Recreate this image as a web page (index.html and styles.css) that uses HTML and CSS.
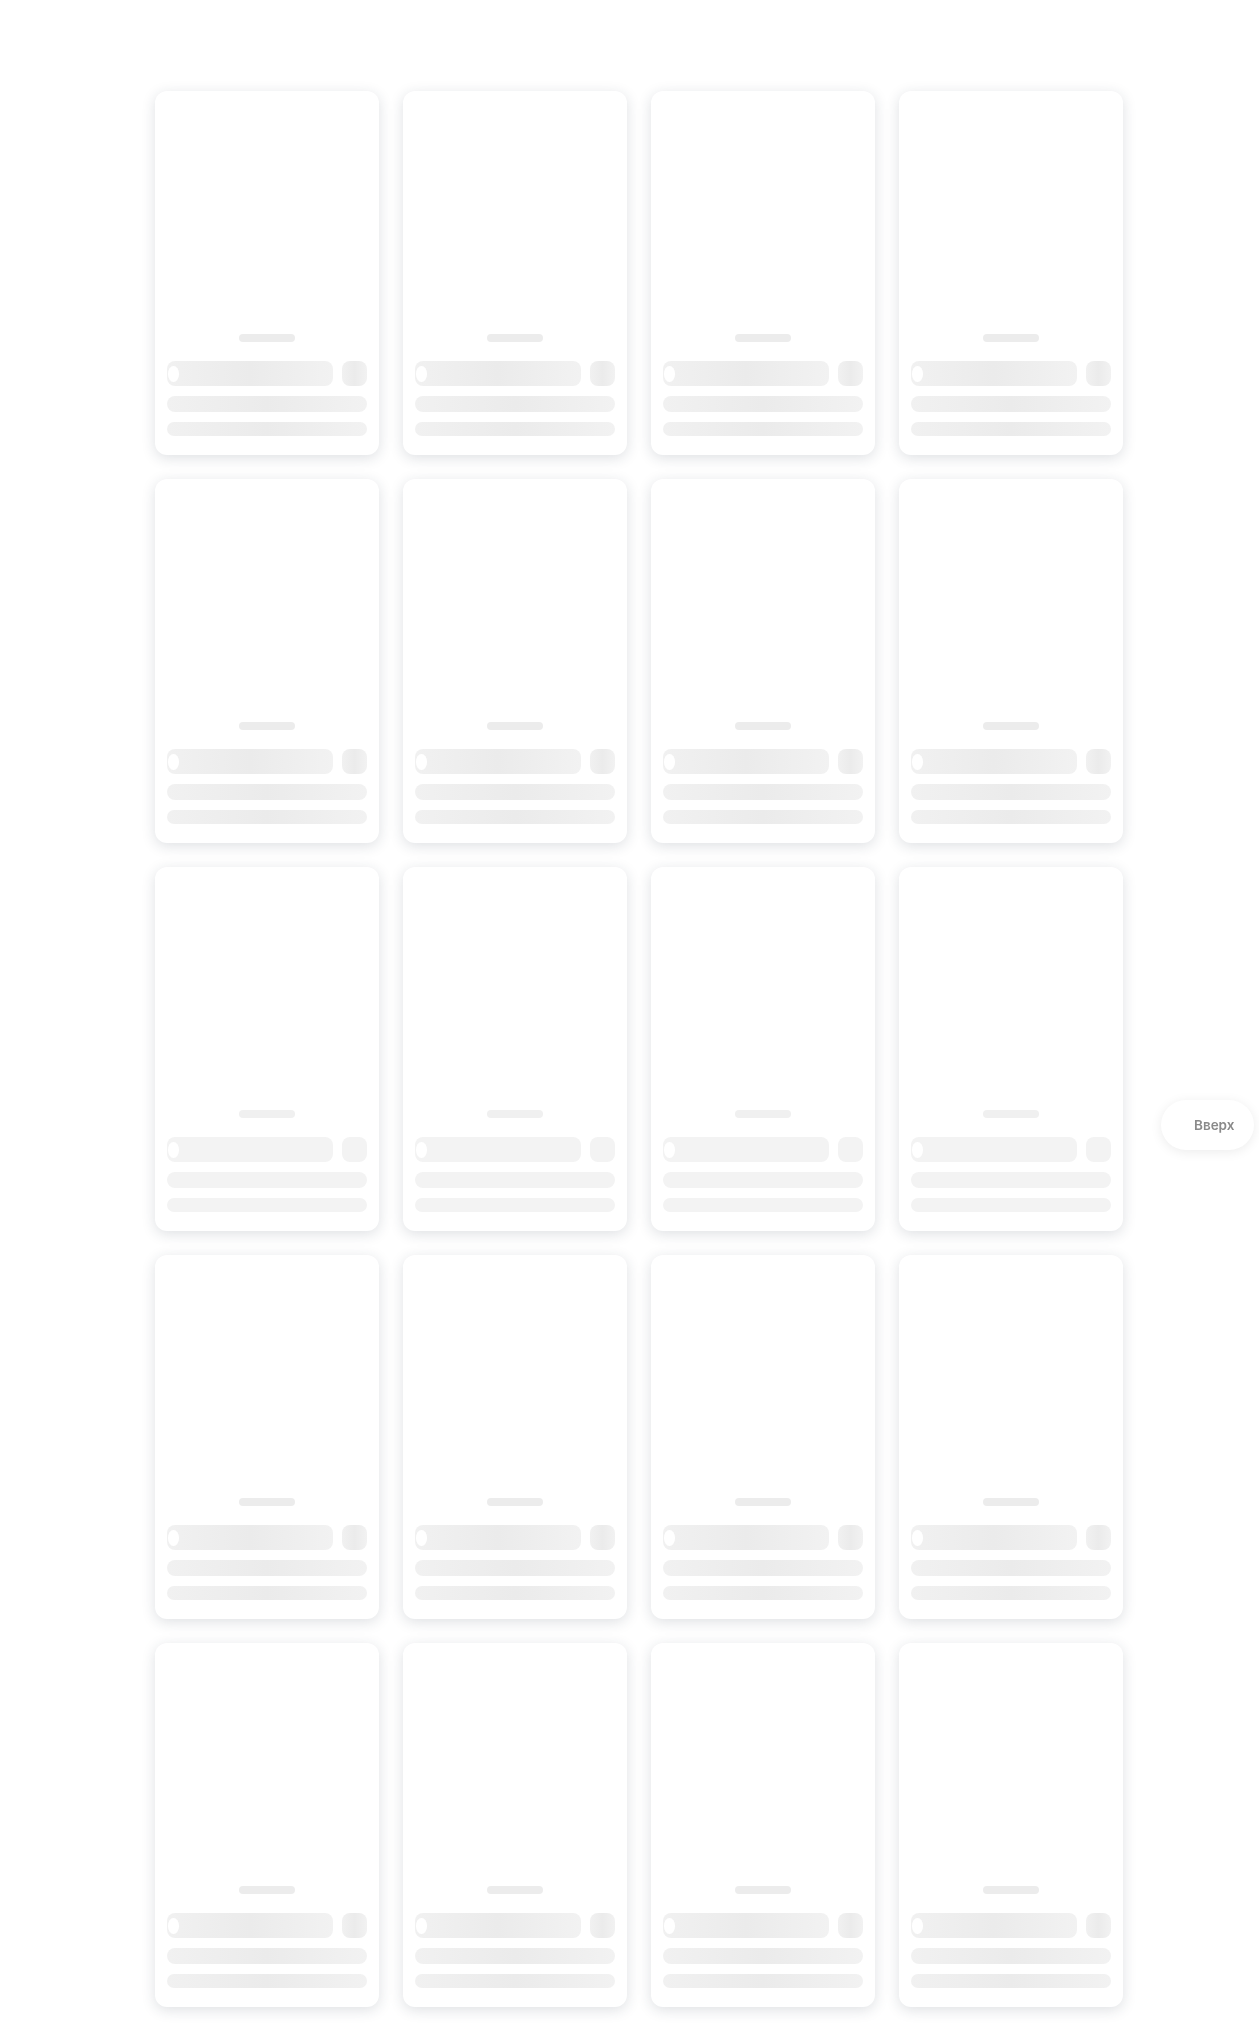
FILE: index.html
```html
<!DOCTYPE html>
<html lang="ru">
<head>
<meta charset="utf-8">
<title>Каталог</title>
<link rel="stylesheet" href="styles.css">
</head>
<body>
<main class="grid">
  <div class="card"><div class="dash"></div><div class="row"><div class="sk title"><span class="dot"></span></div><div class="sk sq"></div></div><div class="sk line1"></div><div class="sk line2"></div></div>
  <div class="card"><div class="dash"></div><div class="row"><div class="sk title"><span class="dot"></span></div><div class="sk sq"></div></div><div class="sk line1"></div><div class="sk line2"></div></div>
  <div class="card"><div class="dash"></div><div class="row"><div class="sk title"><span class="dot"></span></div><div class="sk sq"></div></div><div class="sk line1"></div><div class="sk line2"></div></div>
  <div class="card"><div class="dash"></div><div class="row"><div class="sk title"><span class="dot"></span></div><div class="sk sq"></div></div><div class="sk line1"></div><div class="sk line2"></div></div>
  <div class="card"><div class="dash"></div><div class="row"><div class="sk title"><span class="dot"></span></div><div class="sk sq"></div></div><div class="sk line1"></div><div class="sk line2"></div></div>
  <div class="card"><div class="dash"></div><div class="row"><div class="sk title"><span class="dot"></span></div><div class="sk sq"></div></div><div class="sk line1"></div><div class="sk line2"></div></div>
  <div class="card"><div class="dash"></div><div class="row"><div class="sk title"><span class="dot"></span></div><div class="sk sq"></div></div><div class="sk line1"></div><div class="sk line2"></div></div>
  <div class="card"><div class="dash"></div><div class="row"><div class="sk title"><span class="dot"></span></div><div class="sk sq"></div></div><div class="sk line1"></div><div class="sk line2"></div></div>
  <div class="card light"><div class="dash"></div><div class="row"><div class="sk title"><span class="dot"></span></div><div class="sk sq"></div></div><div class="sk line1"></div><div class="sk line2"></div></div>
  <div class="card light"><div class="dash"></div><div class="row"><div class="sk title"><span class="dot"></span></div><div class="sk sq"></div></div><div class="sk line1"></div><div class="sk line2"></div></div>
  <div class="card light"><div class="dash"></div><div class="row"><div class="sk title"><span class="dot"></span></div><div class="sk sq"></div></div><div class="sk line1"></div><div class="sk line2"></div></div>
  <div class="card light"><div class="dash"></div><div class="row"><div class="sk title"><span class="dot"></span></div><div class="sk sq"></div></div><div class="sk line1"></div><div class="sk line2"></div></div>
  <div class="card"><div class="dash"></div><div class="row"><div class="sk title"><span class="dot"></span></div><div class="sk sq"></div></div><div class="sk line1"></div><div class="sk line2"></div></div>
  <div class="card"><div class="dash"></div><div class="row"><div class="sk title"><span class="dot"></span></div><div class="sk sq"></div></div><div class="sk line1"></div><div class="sk line2"></div></div>
  <div class="card"><div class="dash"></div><div class="row"><div class="sk title"><span class="dot"></span></div><div class="sk sq"></div></div><div class="sk line1"></div><div class="sk line2"></div></div>
  <div class="card"><div class="dash"></div><div class="row"><div class="sk title"><span class="dot"></span></div><div class="sk sq"></div></div><div class="sk line1"></div><div class="sk line2"></div></div>
  <div class="card"><div class="dash"></div><div class="row"><div class="sk title"><span class="dot"></span></div><div class="sk sq"></div></div><div class="sk line1"></div><div class="sk line2"></div></div>
  <div class="card"><div class="dash"></div><div class="row"><div class="sk title"><span class="dot"></span></div><div class="sk sq"></div></div><div class="sk line1"></div><div class="sk line2"></div></div>
  <div class="card"><div class="dash"></div><div class="row"><div class="sk title"><span class="dot"></span></div><div class="sk sq"></div></div><div class="sk line1"></div><div class="sk line2"></div></div>
  <div class="card"><div class="dash"></div><div class="row"><div class="sk title"><span class="dot"></span></div><div class="sk sq"></div></div><div class="sk line1"></div><div class="sk line2"></div></div>
</main>
<button class="to-top">Вверх</button>
</body>
</html>
```
FILE: styles.css
```css
html, body {
  margin: 0;
  padding: 0;
  background: #ffffff;
  font-family: "Inter", "Liberation Sans", sans-serif;
}
.grid {
  display: grid;
  grid-template-columns: repeat(4, 224px);
  grid-auto-rows: 364px;
  gap: 24px;
  padding: 91px 0 20px 155px;
}
.card {
  background: #fff;
  border-radius: 12px;
  box-shadow: 0 3px 14px rgba(35, 45, 70, 0.15);
  padding: 12px 12px 19px;
  display: flex;
  flex-direction: column;
  justify-content: flex-end;
  box-sizing: border-box;
}
.dash {
  align-self: center;
  width: 56px;
  height: 8px;
  border-radius: 4px;
  background: #ececec;
  margin-bottom: 19px;
}
.row {
  display: flex;
  gap: 9px;
  height: 25px;
}
.sk {
  background: linear-gradient(90deg, #f1f1f1 0%, #ebebeb 50%, #f2f2f2 100%);
}
.light .sk {
  background: #f3f3f3;
}
.light .dash {
  background: #f0f0f0;
}
.title {
  flex: 1;
  border-radius: 8px;
  position: relative;
}
.dot {
  position: absolute;
  left: 1px;
  top: 5px;
  width: 11px;
  height: 16px;
  border-radius: 50%;
  background: #fff;
}
.sq {
  width: 25px;
  border-radius: 8px;
}
.line1 {
  margin-top: 10px;
  height: 16px;
  border-radius: 8px;
}
.line2 {
  margin-top: 10px;
  height: 14px;
  border-radius: 7px;
}
.to-top {
  position: fixed;
  left: 1161px;
  top: 1100px;
  width: 93px;
  height: 50px;
  border: none;
  border-radius: 25px;
  background: #fff;
  box-shadow: 0 2px 12px rgba(0, 0, 0, 0.08);
  color: #8a8a8a;
  font-family: "Inter", "Liberation Sans", sans-serif;
  font-size: 13.5px;
  font-weight: 600;
  padding: 0 18px 0 33px;
  text-align: left;
  cursor: pointer;
}
```
